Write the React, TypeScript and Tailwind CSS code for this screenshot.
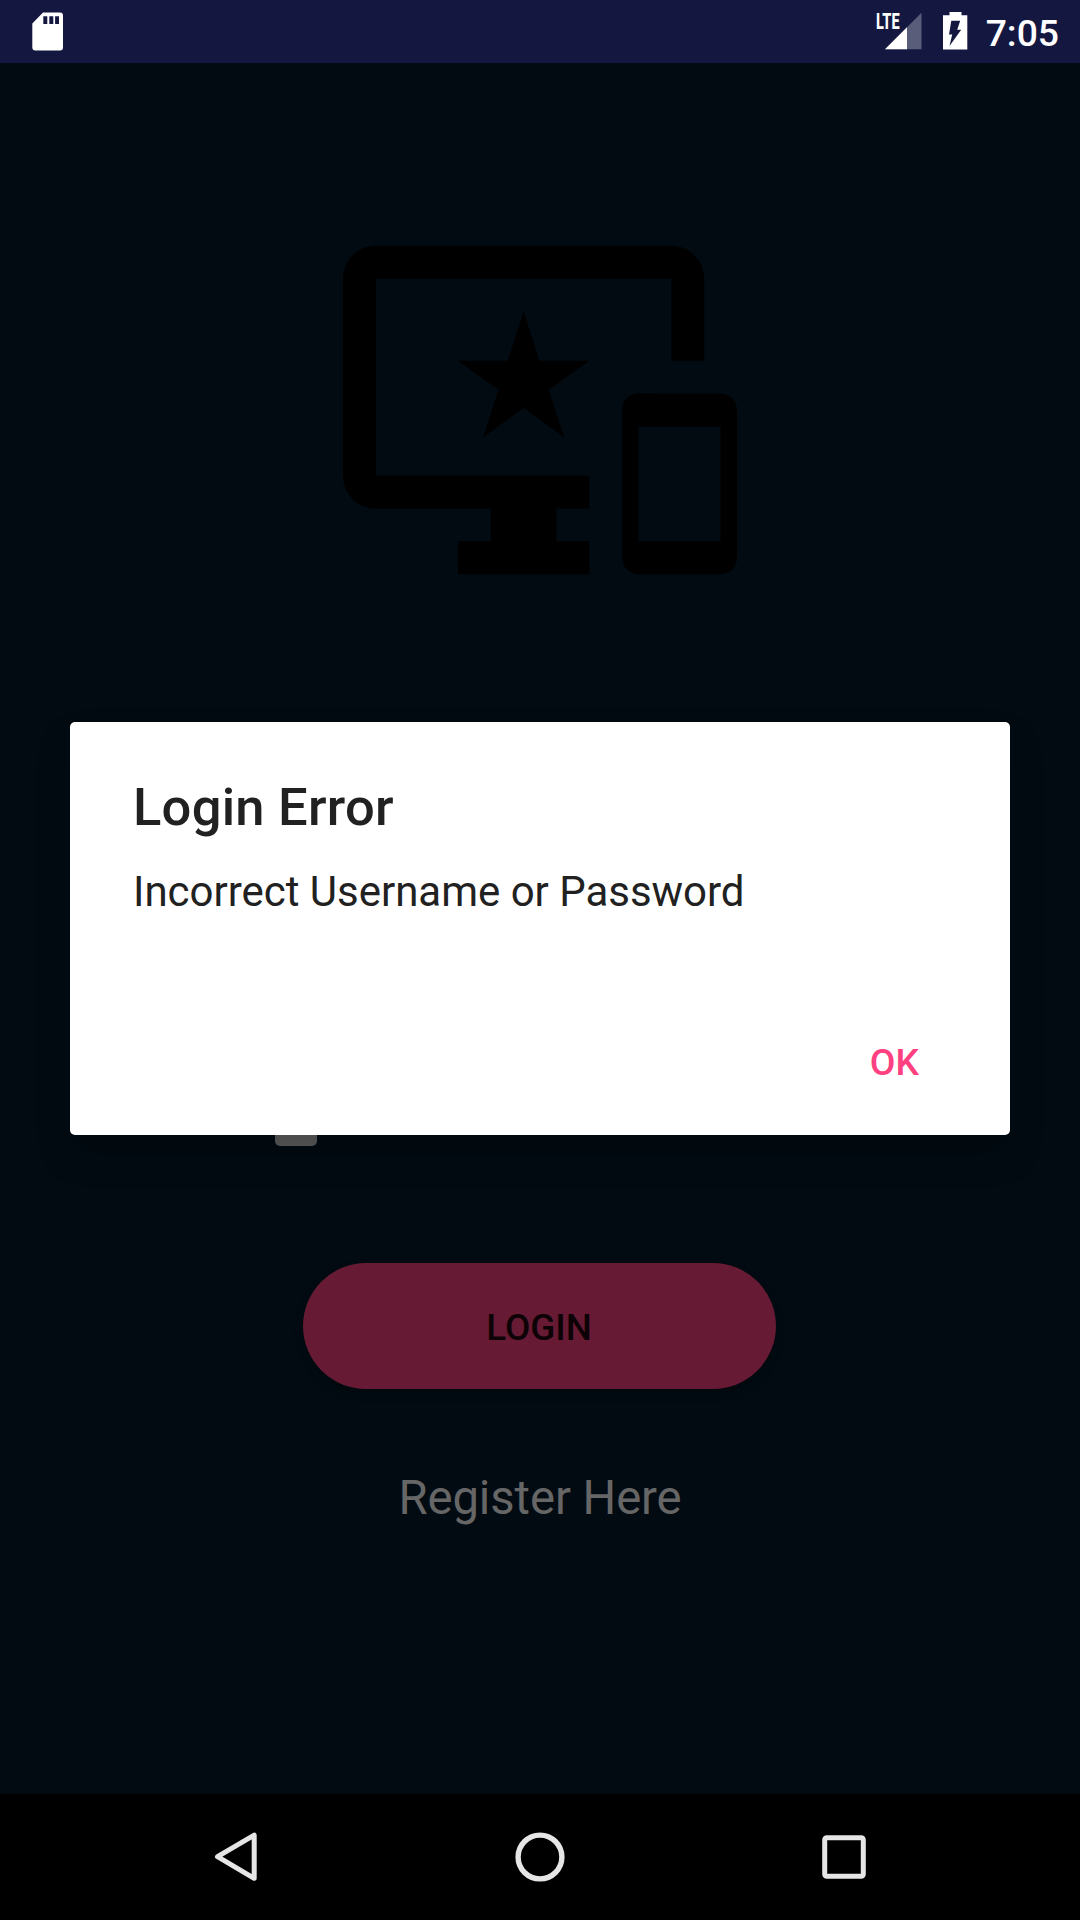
import React from "react";

function StatusBar() {
  return (
    <header className="flex h-[63px] shrink-0 items-start justify-between bg-[#141841] text-white">
      <svg className="ml-8 mt-3" width="32" height="40" viewBox="0 0 32 40" fill="currentColor">
        <path
          fillRule="evenodd"
          d="M11 .4H28a3 3 0 0 1 3 3V35.500a3 3 0 0 1-3 3H3.300a3 3 0 0 1-3-3V11.500zM11.300 4.300V12H15.300V4.300zM17.300 4.300V12H21.300V4.300zM23.100 4.300V12H27V4.300z"
        />
      </svg>
      <div className="flex items-start">
        <div className="relative mr-[21px] mt-3 h-[38px] w-[46px]">
          <svg className="absolute inset-0" width="46" height="38" viewBox="0 0 46 38">
            <path d="M45.500 .8V37.300H9z" fill="#fff" fillOpacity=".3" />
            <path d="M31 15.300V37.300H9z" fill="#fff" />
          </svg>
          <span className="absolute left-0 top-px origin-left scale-x-[0.66] text-[22px] leading-[18px] font-extrabold">LTE</span>
        </div>
        <svg className="mr-[18px] mt-3" width="25" height="38" viewBox="0 0 25 38" fill="#fff">
          <path
            fillRule="evenodd"
            d="M6.500 0H18.500V3.200H24.300V37.500H0V3.200H6.500zM8.300 8.700L6 22.500H9.200L6.500 34L18.200 17.700H14.200L17.200 8.700z"
          />
        </svg>
        <span className="mr-[21px] mt-3 text-[37.250px] leading-[43px] font-medium">7:05</span>
      </div>
    </header>
  );
}

function DevicesIcon() {
  return (
    <svg className="mt-[150px] shrink-0" width="394" height="394" viewBox="0 0 24 24" fill="#000">
      <path d="M23 11.010L18 11c-.55 0-1 .45-1 1v9c0 .55.45 1 1 1h5c.55 0 1-.45 1-1v-9c0-.55-.45-.99-1-.99zM23 20h-5v-7h5v7zM20 2H2C.89 2 0 2.890 0 4v12c0 1.100.89 2 2 2h7v2H7v2h8v-2h-2v-2h2v-2H2V4h18v5h2V4c0-1.110-.9-2-2-2zm-8.030 7L11 6l-.97 3H7l2.470 1.760-.94 2.910 2.470-1.800 2.470 1.800-.94-2.910L15 9h-3.030z" />
    </svg>
  );
}

function LoginErrorDialog() {
  return (
    <div
      role="dialog"
      className="absolute left-[70px] top-[722px] flex h-[413px] w-[940px] flex-col rounded-[5px] bg-white px-[63px] shadow-[0_20px_35px_rgba(0,0,0,0.2)]"
    >
      <h1 className="mt-[54px] text-[52.5px] leading-[62px] font-medium tracking-[0.25px] text-[#212121]">Login Error</h1>
      <p className="mt-[29px] text-[42px] leading-[49px] tracking-[-0.02px] text-[#212121]">Incorrect Username or Password</p>
      <button className="mr-[28px] mt-[125px] self-end text-[37.25px] leading-[43px] font-medium text-[#ff4081]">
        OK
      </button>
    </div>
  );
}

function NavigationBar() {
  return (
    <nav className="flex h-[126px] shrink-0 items-center justify-center gap-[254px] bg-black">
      <svg width="50" height="50" viewBox="0 0 50 50" fill="none" stroke="#e6e6e6" strokeWidth="5" strokeLinejoin="round">
        <path d="M43.200 3.200V46.300L6.500 24.700z" />
      </svg>
      <svg width="50" height="50" viewBox="0 0 50 50" fill="none" stroke="#e6e6e6" strokeWidth="5.4">
        <circle cx="25" cy="25" r="21.900" />
      </svg>
      <svg width="50" height="50" viewBox="0 0 50 50" fill="none" stroke="#e6e6e6" strokeWidth="5">
        <rect x="5.700" y="5.700" width="38.600" height="38.600" rx="2" />
      </svg>
    </nav>
  );
}

export default function App() {
  return (
    <div className="relative flex h-[1920px] w-[1080px] flex-col overflow-hidden bg-[#020b12] font-['Roboto',sans-serif]">
      <StatusBar />
      <main className="flex flex-1 flex-col items-center">
        <DevicesIcon />
        <div className="ml-[275px] mt-[497px] h-[42px] w-[42px] self-start rounded-[5px] bg-[#5c5c5c]" />
        <button className="mr-[2px] mt-[117px] h-[126px] w-[473px] rounded-full bg-[#661a33] pt-[4px] text-[36.75px] font-medium text-[#0d0307] shadow-[0_5px_10px_rgba(0,0,0,0.2)]">
          LOGIN
        </button>
        <a className="mt-[82px] text-[47.25px] leading-[55px] tracking-[-0.08px] text-[#666666]">Register Here</a>
      </main>
      <NavigationBar />
      <LoginErrorDialog />
    </div>
  );
}
